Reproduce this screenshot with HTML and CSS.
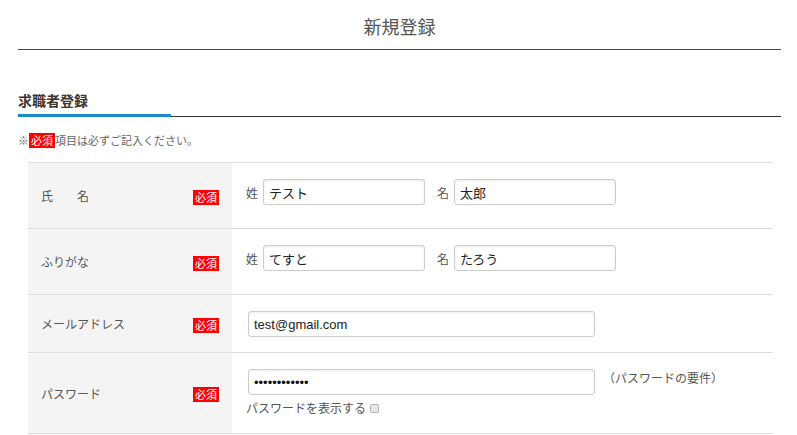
FILE: index.html
```html
<!DOCTYPE html>
<html>
<head>
    <meta charset="utf-8">
    <title>新規登録</title>
    <link rel="stylesheet" href="styles.css">
</head>
<body>
    <div class="wrap">
        <h1 class="page-title">新規登録</h1>

        <h2 class="section-title"><span>求職者登録</span></h2>
        <p class="note">※<span class="req">必須</span>項目は必ずご記入ください。</p>

        <div class="form-table">
            <!-- 氏名 -->
            <div class="row">
                <div class="label">
                    <span>氏　　名</span>
                    <span class="req">必須</span>
                </div>
                <div class="field name-field">
                    <span class="sub">姓</span>
                    <input class="input short" type="text" value="テスト">
                    <span class="sub gap">名</span>
                    <input class="input short" type="text" value="太郎">
                </div>
            </div>

            <!-- ふりがな -->
            <div class="row">
                <div class="label">
                    <span>ふりがな</span>
                    <span class="req">必須</span>
                </div>
                <div class="field name-field">
                    <span class="sub">姓</span>
                    <input class="input short" type="text" value="てすと">
                    <span class="sub gap">名</span>
                    <input class="input short" type="text" value="たろう">
                </div>
            </div>

            <!-- メール -->
            <div class="row">
                <div class="label">
                    <span>メールアドレス</span>
                    <span class="req">必須</span>
                </div>
                <div class="field wide-field">
                    <input class="input long" type="text" value="test@gmail.com">
                </div>
            </div>

            <!-- パスワード -->
            <div class="row">
                <div class="label">
                    <span>パスワード</span>
                    <span class="req">必須</span>
                </div>
                <div class="field wide-field pw-field">
                    <div class="pw-line">
                        <input class="input long pw" type="password" value="password1234">
                        <span class="hint">（パスワードの要件）</span>
                    </div>
                    <label class="show-pw">パスワードを表示する<input class="check" type="checkbox"></label>
                </div>
            </div>
        </div>
    </div>
</body>
</html>
```

FILE: styles.css
```css
* {
    box-sizing: border-box;
}

body {
    margin: 0;
    background: #fff;
    color: #555;
    font-family: "Noto Sans CJK JP", "Noto Sans", sans-serif;
}

.wrap {
    padding: 0 16px 0 18px;
}

/* page title */

.page-title {
    margin: 0;
    padding: 14px 0 10px;
    text-align: center;
    font-size: 18px;
    font-weight: normal;
    line-height: 25px;
    color: #555;
    border-bottom: 1px solid #3b4a6b;
}

/* section title */

.section-title {
    margin: 40px 0 0;
    display: flex;
    font-size: 14px;
    line-height: 20px;
    color: #3e3430;
    border-bottom: 1px solid #333;
}

.section-title span {
    width: 153px;
    padding-bottom: 4px;
    margin-bottom: -1px;
    border-bottom: 3px solid #1a8bcf;
}

.note {
    margin: 15px 0 0;
    font-size: 11px;
    line-height: 16px;
    color: #666;
}

.req {
    display: inline-block;
    background: #f00;
    color: #fff;
    font-size: 11px;
    line-height: 15px;
    padding: 0 2px;
}

/* form table */

.form-table {
    margin: 14px 8px 0 10px;
    border-top: 1px solid #ddd;
}

.row {
    display: flex;
    border-bottom: 1px solid #ddd;
}

.label {
    width: 204px;
    flex-shrink: 0;
    background: #f4f4f4;
    padding: 0 13px;
    display: flex;
    align-items: center;
    justify-content: space-between;
    font-size: 12px;
    color: #555;
}

.label .req {
    margin-top: 3px;
}

.field {
    flex: 1;
    display: flex;
    align-items: center;
    padding: 16px 14px;
    font-size: 12px;
    color: #555;
}

.name-field {
    padding-bottom: 23px;
}

.wide-field {
    padding: 16px 16px 15px;
}

.sub {
    margin-right: 5px;
}

.sub.gap {
    margin-left: 12px;
}

.input {
    height: 26px;
    border: 1px solid #ccc;
    border-radius: 3px;
    box-shadow: inset 0 1px 2px rgba(0, 0, 0, 0.08);
    padding: 0 5px;
    font-family: "Liberation Sans", "Noto Sans CJK JP", sans-serif;
    font-size: 13px;
    color: #222;
    background: #fff;
}

.input.short {
    width: 162px;
}

.input.long {
    width: 347px;
}

.input.pw {
    font-size: 13px;
    color: #111;
}

.pw-field {
    flex-direction: column;
    align-items: flex-start;
    padding: 16px 14px 17px;
}

.pw-line {
    display: flex;
    align-items: flex-start;
    padding-left: 2px;
}

.hint {
    margin: 1px 0 0 8px;
    font-size: 12px;
    line-height: 16px;
    color: #555;
}

.show-pw {
    display: flex;
    align-items: center;
    margin-top: 5px;
    font-size: 12px;
    line-height: 16px;
    color: #555;
}

.check {
    -webkit-appearance: none;
    appearance: none;
    width: 9px;
    height: 9px;
    margin: 0 0 0 4px;
    border: 1px solid #b5b5b5;
    border-radius: 2px;
    background: #e6e6e6;
}
```
